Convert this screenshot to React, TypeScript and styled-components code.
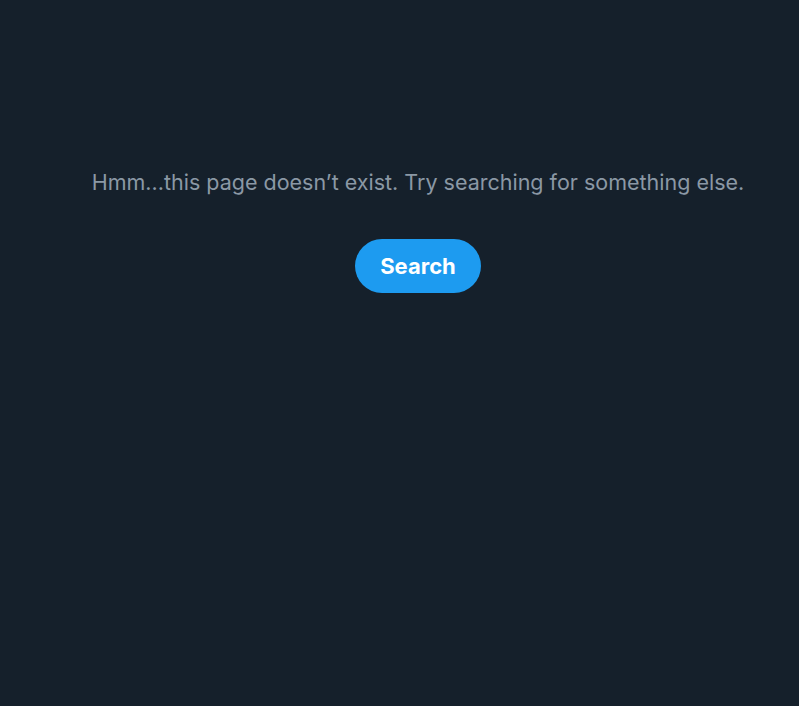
import React from "react";
import styled, { createGlobalStyle } from "styled-components";

const Global = createGlobalStyle`
  html, body { margin: 0; padding: 0; background: #15202b; }
  body { font-family: Inter, "Noto Sans", "Liberation Sans", sans-serif; }
`;

const Page = styled.main`
  box-sizing: border-box;
  width: 100%;
  min-height: 706px;
  background: #15202b;
  padding: 169px 0 0 37px;
  display: flex;
  flex-direction: column;
  align-items: center;
`;

const Message = styled.p`
  margin: 0;
  font-size: 21.5px;
  line-height: 26px;
  color: #8b98a5;
  font-weight: 400;
  text-align: center;
  white-space: nowrap;
`;

const SearchButton = styled.button`
  margin-top: 44px;
  height: 54px;
  padding: 0 25px;
  border: none;
  border-radius: 9999px;
  background: #1d9bf0;
  color: #ffffff;
  font-family: Inter, "Noto Sans", "Liberation Sans", sans-serif;
  font-size: 22px;
  font-weight: 700;
  cursor: pointer;
`;

export default function App() {
  return (
    <>
      <Global />
      <Page>
        <Message>Hmm...this page doesn’t exist. Try searching for something else.</Message>
        <SearchButton>Search</SearchButton>
      </Page>
    </>
  );
}
